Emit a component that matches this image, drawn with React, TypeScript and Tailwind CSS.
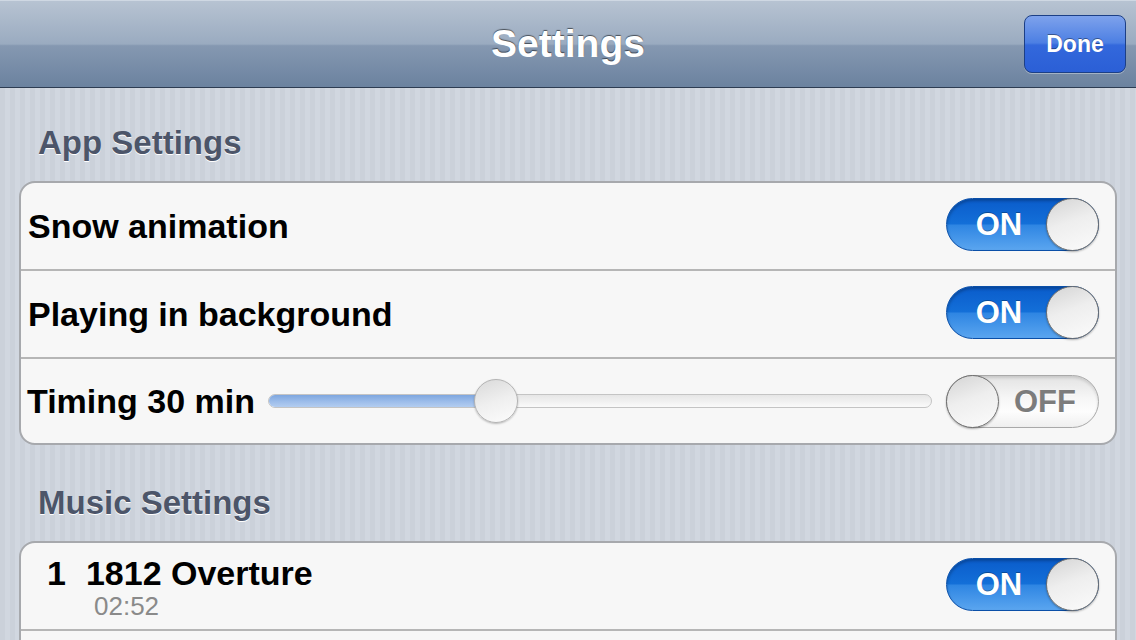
import React from 'react'

function OnSwitch() {
  return (
    <div className="relative mb-[3px] h-[53px] w-[153px] shrink-0 rounded-full border border-[#0a4fa8] bg-[linear-gradient(180deg,#0a5ccb_0%,#136fd8_48%,#2f86e3_52%,#5aa5ef_100%)] shadow-[inset_0_2px_3px_rgba(0,0,0,0.25)]">
      <span className="absolute left-0 top-0 flex h-full w-[106px] items-center justify-center pr-[2px] text-[31px] font-bold leading-none text-white [text-shadow:0_-1px_0_rgba(0,0,0,0.3)]">
        ON
      </span>
      <div className="absolute right-[-1px] top-[-1px] h-[53px] w-[53px] rounded-full border border-[#6e6e6e] bg-[linear-gradient(160deg,#d4d4d4_0%,#eeeeee_45%,#fbfbfb_100%)] shadow-[0_1px_2px_rgba(0,0,0,0.3)]" />
    </div>
  )
}

function OffSwitch() {
  return (
    <div className="relative h-[53px] w-[153px] shrink-0 rounded-full border border-[#a9a9a9] bg-[linear-gradient(180deg,#e3e3e3_0%,#f7f7f7_45%,#fdfdfd_70%,#efefef_100%)] shadow-[inset_0_2px_3px_rgba(0,0,0,0.12)]">
      <span className="absolute right-0 top-0 flex h-full w-[100px] items-center justify-center pr-[6px] text-[31px] font-bold leading-none text-[#7c7c7c] [text-shadow:0_1px_0_#ffffff]">
        OFF
      </span>
      <div className="absolute left-[-1px] top-[-1px] h-[53px] w-[53px] rounded-full border border-[#6e6e6e] bg-[linear-gradient(160deg,#d4d4d4_0%,#eeeeee_45%,#fbfbfb_100%)] shadow-[0_1px_2px_rgba(0,0,0,0.3)]" />
    </div>
  )
}

function SectionTitle({ children, top }: { children: React.ReactNode; top: string }) {
  return (
    <div className={`${top} pb-[18px] pl-[38px]`}>
      <h2 className="h-[40px] text-[33px] font-bold leading-[40px] text-[#4c5569] [text-shadow:0_1px_0_#ffffff]">{children}</h2>
    </div>
  )
}

export default function App() {
  return (
    <div className="h-[640px] w-[1136px] overflow-hidden bg-[repeating-linear-gradient(90deg,#cbd1da_0px,#cbd1da_5px,#d1d7e0_5px,#d1d7e0_10px)] font-['Liberation_Sans',Arial,sans-serif]">
      {/* nav bar */}
      <header className="grid h-[88px] grid-cols-[1fr_auto_1fr] items-center border-b border-t border-b-[#2d3c52] border-t-[#cfd8e3] bg-[linear-gradient(180deg,#b7c3d2_0%,#9aabc0_50%,#8598b1_52%,#6b829f_100%)]">
        <div />
        <h1 className="pb-[2px] text-[39px] font-bold leading-none text-white [text-shadow:0_-1px_1px_rgba(0,0,0,0.55)]">Settings</h1>
        <div className="flex justify-end pr-[10px]">
          <button className="flex h-[58px] w-[102px] items-center justify-center rounded-[8px] border border-[#1c3f86] bg-[linear-gradient(180deg,#7ea2ec_0%,#4c7fe3_48%,#3368dc_52%,#2b5fd6_100%)] text-[23px] font-bold text-white shadow-[0_1px_0_rgba(255,255,255,0.35)] [text-shadow:0_-1px_0_rgba(0,0,0,0.4)]">
            Done
          </button>
        </div>
      </header>

      <SectionTitle top="pt-[35px]">App Settings</SectionTitle>

      <div className="mx-[19px] overflow-hidden rounded-[16px] border-2 border-[#a7a9ad] bg-[#f7f7f7]">
        <div className="flex h-[86px] items-center justify-between pl-[7px] pr-[16px]">
          <span className="text-[34px] font-bold leading-none text-black">Snow animation</span>
          <OnSwitch />
        </div>
        <div className="flex h-[88px] items-center justify-between border-t-2 border-[#b6b6b6] pl-[7px] pr-[16px]">
          <span className="text-[34px] font-bold leading-none text-black">Playing in background</span>
          <OnSwitch />
        </div>
        <div className="flex h-[86px] items-center border-t-2 border-[#b6b6b6] pl-[6px] pr-[16px]">
          <span className="shrink-0 text-[34px] font-bold leading-none text-black">Timing 30 min</span>
          <div className="relative ml-[13px] mr-[14px] h-[14px] flex-1 rounded-full border border-[#c4c4c4] bg-[linear-gradient(180deg,#e6e6e6,#fafafa)]">
            <div className="h-full w-[222px] rounded-full bg-[linear-gradient(180deg,#7ea6df_0%,#9dbdea_55%,#b3cdf0_100%)]" />
            <div className="absolute left-[205px] top-[-16px] h-[44px] w-[44px] rounded-full border border-[#b3b3b3] bg-[linear-gradient(160deg,#d9d9d9_0%,#efefef_50%,#fcfcfc_100%)] shadow-[0_1px_2px_rgba(0,0,0,0.25)]" />
          </div>
          <OffSwitch />
        </div>
      </div>

      <SectionTitle top="pt-[38px]">Music Settings</SectionTitle>

      <div className="mx-[19px] overflow-hidden rounded-[16px] border-2 border-[#a7a9ad] bg-[#f7f7f7]">
        <div className="flex h-[86px] items-center justify-between pl-[26px] pr-[16px]">
          <div className="flex flex-col pt-[3px]">
            <div className="flex text-[34px] font-bold leading-[36px] text-black">
              <span>1</span>
              <span className="ml-[20px]">1812 Overture</span>
            </div>
            <span className="pl-[47px] text-[26px] leading-[30px] text-[#8a8a8a]">02:52</span>
          </div>
          <OnSwitch />
        </div>
        <div className="h-[88px] border-t-2 border-[#b6b6b6]" />
      </div>
    </div>
  )
}
